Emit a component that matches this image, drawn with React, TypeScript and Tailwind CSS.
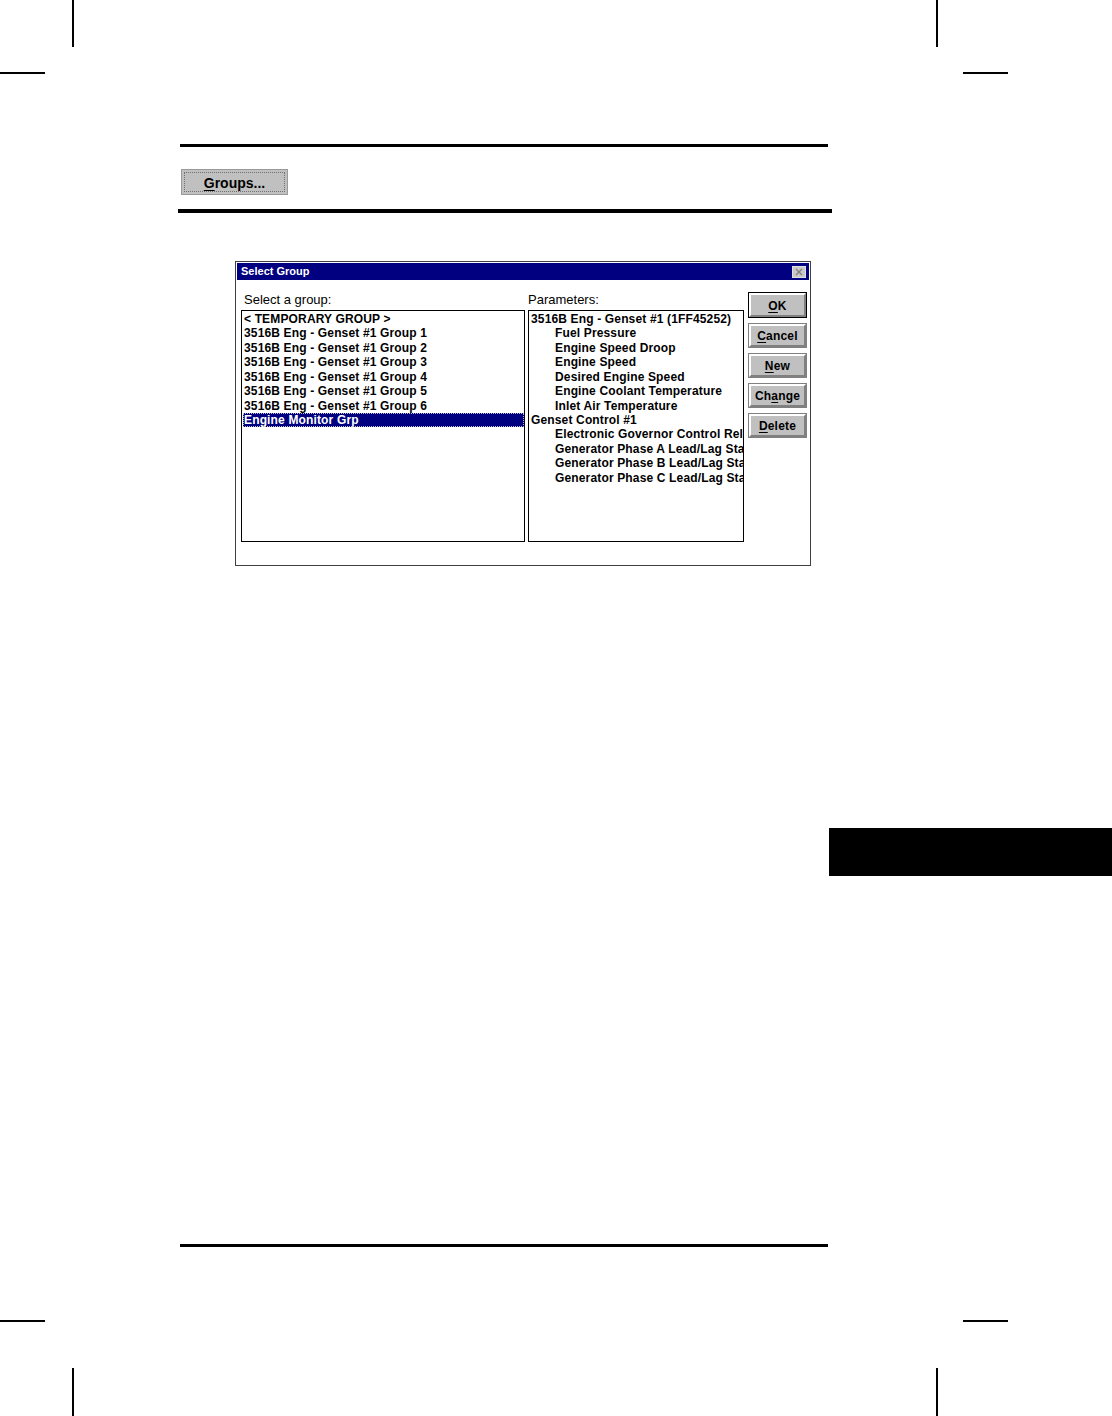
import React from "react";

const font = { fontFamily: '"Liberation Sans", Arial, sans-serif' };

function WinButton({ label, u, def }: { label: string; u: number; def?: boolean }) {
  return (
    <div
      className={`w-[59px] ${def ? "h-[26px] border-black" : "h-[25px] border-[#808080]"} border bg-[#c0c0c0] flex`}
    >
      <div className="flex-1 border-t-2 border-l-2 border-b-2 border-r-2 border-t-white border-l-white border-b-[#808080] border-r-[#808080] flex items-center justify-center pt-[1px] text-[12px] font-bold tracking-[0.2px] text-black">
        <span>
          {label.slice(0, u)}
          <span className="underline underline-offset-2">{label.charAt(u)}</span>
          {label.slice(u + 1)}
        </span>
      </div>
    </div>
  );
}

const groups = [
  "< TEMPORARY GROUP >",
  "3516B Eng - Genset #1 Group 1",
  "3516B Eng - Genset #1 Group 2",
  "3516B Eng - Genset #1 Group 3",
  "3516B Eng - Genset #1 Group 4",
  "3516B Eng - Genset #1 Group 5",
  "3516B Eng - Genset #1 Group 6",
  "Engine Monitor Grp",
];

const params: { t: string; indent?: boolean }[] = [
  { t: "3516B Eng - Genset #1 (1FF45252)" },
  { t: "Fuel Pressure", indent: true },
  { t: "Engine Speed Droop", indent: true },
  { t: "Engine Speed", indent: true },
  { t: "Desired Engine Speed", indent: true },
  { t: "Engine Coolant Temperature", indent: true },
  { t: "Inlet Air Temperature", indent: true },
  { t: "Genset Control #1" },
  { t: "Electronic Governor Control Relay Status", indent: true },
  { t: "Generator Phase A Lead/Lag Status", indent: true },
  { t: "Generator Phase B Lead/Lag Status", indent: true },
  { t: "Generator Phase C Lead/Lag Status", indent: true },
];

export default function App() {
  return (
    <div className="relative w-[1112px] h-[1416px] bg-white overflow-hidden text-black" style={font}>
      {/* crop marks */}
      <div className="absolute left-[72px] top-0 w-[2px] h-[47px] bg-black" />
      <div className="absolute left-0 top-[72px] w-[45px] h-[1.5px] bg-black" />
      <div className="absolute left-[936px] top-0 w-[2px] h-[47px] bg-black" />
      <div className="absolute left-[963px] top-[72px] w-[45px] h-[1.5px] bg-black" />
      <div className="absolute left-0 top-[1320px] w-[45px] h-[1.5px] bg-black" />
      <div className="absolute left-[72px] top-[1368px] w-[2px] h-[48px] bg-black" />
      <div className="absolute left-[963px] top-[1320px] w-[45px] h-[1.5px] bg-black" />
      <div className="absolute left-[936px] top-[1368px] w-[2px] h-[48px] bg-black" />
      {/* side tab */}
      <div className="absolute left-[829px] top-[828px] w-[283px] h-[48px] bg-black" />

      <div className="flex flex-col">
        <div className="mt-[144px] ml-[180px] w-[648px] h-[3px] bg-black" />

        <div className="mt-[22px] ml-[181px] w-[107px] h-[26px] bg-[#c0c0c0] border border-[#9a9a9a] p-[2px]">
          <div className="w-full h-full border border-dotted border-[#707070] flex items-center justify-center pt-[3px] text-[14px] font-bold text-black">
            <span>
              <span className="underline underline-offset-2">G</span>roups...
            </span>
          </div>
        </div>

        <div className="mt-[14px] ml-[178px] w-[654px] h-[4px] bg-black" />

        {/* dialog */}
        <div className="mt-[48px] ml-[235px] w-[576px] h-[305px] border border-[#404040] bg-white p-[1px] flex flex-col">
          <div className="h-[17px] bg-[#000080] flex items-center justify-between pl-[4px] pr-[3px]">
            <span className="text-white text-[11px] font-bold leading-none">Select Group</span>
            <div className="w-[14px] h-[12px] bg-[#c8c8c8] border border-[#e0e0e0] flex items-center justify-center">
              <svg width="8" height="8" viewBox="0 0 8 8">
                <path d="M1 1 L7 7 M7 1 L1 7" stroke="#808080" strokeWidth="1.3" />
              </svg>
            </div>
          </div>

          <div className="flex pl-[4px] pt-[12px]">
            <div className="flex flex-col w-[284px]">
              <div className="h-[16px] leading-[16px] text-[13px] pl-[3px]">Select a group:</div>
              <div className="mt-[2px] h-[232px] border border-black overflow-hidden pl-[2px] pt-[1px]">
                {groups.map((g, i) => (
                  <div
                    key={g}
                    className={`h-[14.43px] leading-[14.43px] text-[12px] font-bold tracking-[0.15px] whitespace-nowrap ${
                      i === 7 ? "bg-[#000080] text-white outline-1 outline-dotted outline-[#bfbfbf] -outline-offset-1 -ml-[1px] pl-[1px]" : ""
                    }`}
                  >
                    {g}
                  </div>
                ))}
              </div>
            </div>

            <div className="flex flex-col w-[216px] ml-[3px]">
              <div className="h-[16px] leading-[16px] text-[13px]">Parameters:</div>
              <div className="mt-[2px] h-[232px] border border-black overflow-hidden pl-[2px] pt-[1px]">
                {params.map((p) => (
                  <div
                    key={p.t}
                    className={`h-[14.43px] leading-[14.43px] text-[12px] font-bold tracking-[0.15px] whitespace-nowrap ${
                      p.indent ? "pl-[24px]" : ""
                    }`}
                  >
                    {p.t}
                  </div>
                ))}
              </div>
            </div>

            <div className="flex flex-col gap-[5px] ml-[4px]">
              <WinButton label="OK" u={0} def />
              <WinButton label="Cancel" u={0} />
              <WinButton label="New" u={0} />
              <WinButton label="Change" u={2} />
              <WinButton label="Delete" u={0} />
            </div>
          </div>
        </div>

        <div className="mt-[678px] ml-[180px] w-[648px] h-[3px] bg-black" />
      </div>
    </div>
  );
}
